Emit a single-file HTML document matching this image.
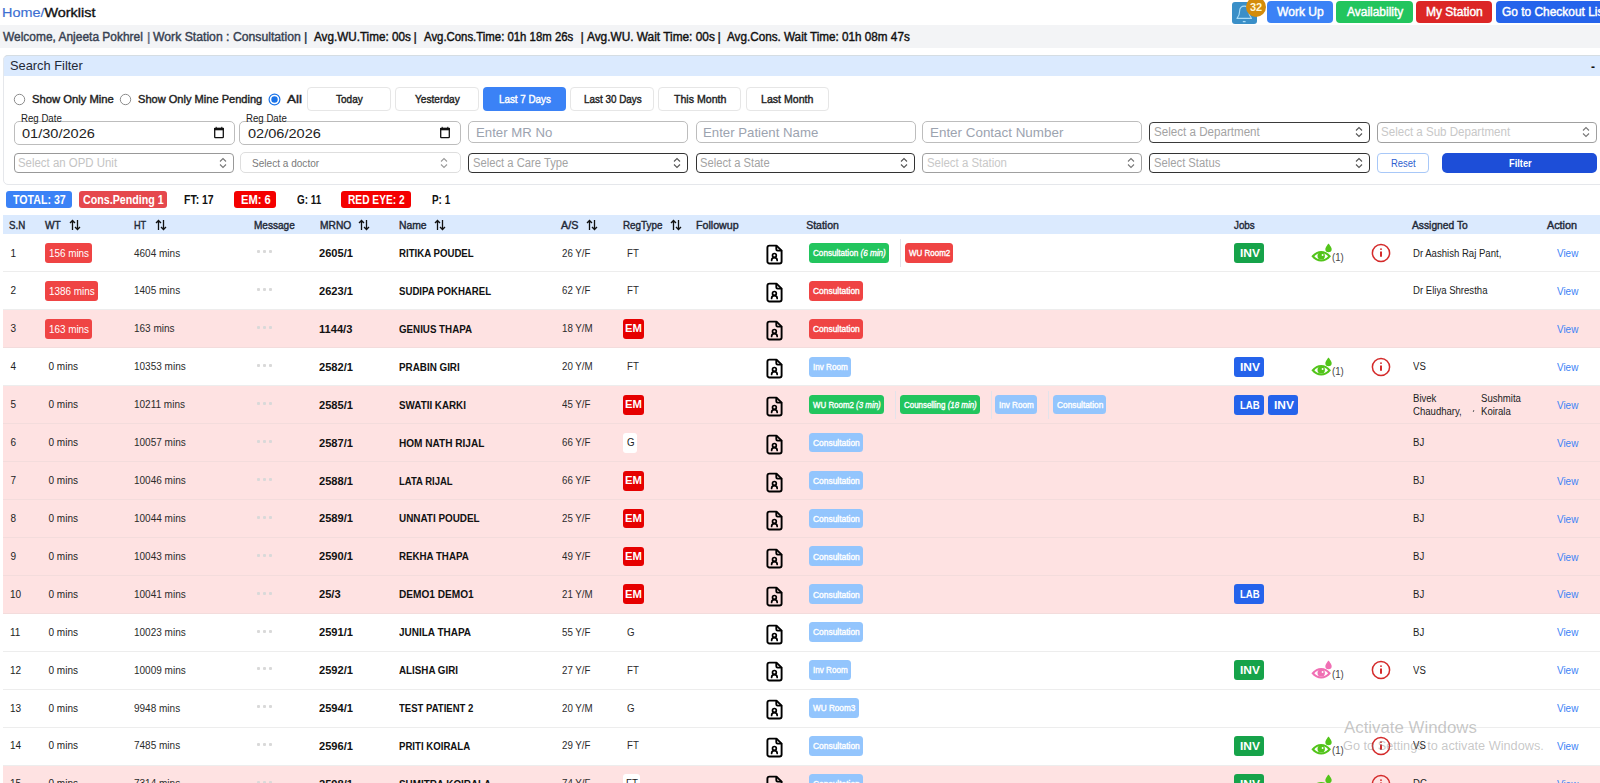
<!DOCTYPE html><html><head><meta charset="utf-8"><style>
html,body{margin:0;padding:0;}
body{width:1600px;height:783px;overflow:hidden;position:relative;background:#fff;font-family:"Liberation Sans",sans-serif;}
.t{position:absolute;white-space:nowrap;transform-origin:0 50%;}
.b{position:absolute;box-sizing:border-box;}
svg{position:absolute;}
</style></head><body>
<div class="t" style="left:2.2px;top:3.8px;font-size:13px;line-height:17px;font-weight:400;color:#111;transform:scaleX(1.108);-webkit-text-stroke:0.35px #111;"><span style="color:#3d6fd2;-webkit-text-stroke:0.15px #3d6fd2">Home/</span>Worklist</div>
<div class="b" style="left:1232px;top:1.8px;width:24.7px;height:21.8px;background:#3a8fc8;border-radius:3px;"></div>
<svg style="left:1232px;top:2px" width="25" height="22" viewBox="0 0 25 22" fill="none" stroke="#a9dcf7" stroke-width="1.1" stroke-linejoin="round"><path d="M5 16.4C7 14.2 7.6 11.2 7.6 9.2C7.6 5.6 9.6 4.1 12.2 4.1C14.8 4.1 16.8 5.6 16.8 9.2C16.8 11.2 17.4 14.2 19.5 16.4Z"/><path d="M10.8 19.6H13.6" stroke-width="1.3"/></svg>
<div class="b" style="left:1245.9px;top:-3px;width:20.2px;height:20.2px;border-radius:50%;background:#d48c0c;"></div>
<div class="t" style="left:1250px;top:0.2px;font-size:11px;line-height:14px;font-weight:700;color:#fff7d6;">32</div>
<div class="b" style="left:1267px;top:1px;width:66px;height:22px;background:#3b82f6;border-radius:4px;"></div>
<div class="t" style="left:1277px;top:4.0px;font-size:12.5px;line-height:16px;font-weight:400;color:#fff;transform:scaleX(0.967);-webkit-text-stroke:0.45px #fff;">Work Up</div>
<div class="b" style="left:1336px;top:1px;width:77px;height:22px;background:#22c55e;border-radius:4px;"></div>
<div class="t" style="left:1347px;top:4.0px;font-size:12.5px;line-height:16px;font-weight:400;color:#fff;transform:scaleX(0.956);-webkit-text-stroke:0.45px #fff;">Availability</div>
<div class="b" style="left:1416px;top:1px;width:76px;height:22px;background:#dc2626;border-radius:4px;"></div>
<div class="t" style="left:1426px;top:4.0px;font-size:12.5px;line-height:16px;font-weight:400;color:#fff;transform:scaleX(0.961);-webkit-text-stroke:0.45px #fff;">My Station</div>
<div class="b" style="left:1496px;top:1px;width:140px;height:22px;background:#2563eb;border-radius:4px;"></div>
<div class="t" style="left:1502px;top:4.0px;font-size:12.5px;line-height:16px;font-weight:400;color:#fff;transform:scaleX(0.954);-webkit-text-stroke:0.45px #fff;">Go to Checkout List</div>
<div class="b" style="left:0px;top:24.5px;width:1600px;height:23.2px;background:#f3f4f6;"></div>
<div class="t" style="left:3px;top:28.5px;font-size:12px;line-height:16px;font-weight:400;color:#374151;transform:scaleX(0.995);-webkit-text-stroke:0.4px #374151;">Welcome, Anjeeta Pokhrel</div>
<div class="t" style="left:147px;top:28.5px;font-size:12px;line-height:16px;font-weight:700;color:#6b7280;">|</div>
<div class="t" style="left:153px;top:28.5px;font-size:12px;line-height:16px;font-weight:400;color:#374151;transform:scaleX(1.018);-webkit-text-stroke:0.4px #374151;">Work Station : Consultation</div>
<div class="t" style="left:304px;top:28.5px;font-size:12px;line-height:16px;font-weight:700;color:#374151;">|</div>
<div class="t" style="left:313.5px;top:28.5px;font-size:12px;line-height:16px;font-weight:400;color:#111;transform:scaleX(0.974);-webkit-text-stroke:0.4px #111;">Avg.WU.Time: 00s</div>
<div class="t" style="left:413.5px;top:28.5px;font-size:12px;line-height:16px;font-weight:700;color:#333;">|</div>
<div class="t" style="left:423.5px;top:28.5px;font-size:12px;line-height:16px;font-weight:400;color:#111;transform:scaleX(0.948);-webkit-text-stroke:0.4px #111;">Avg.Cons.Time: 01h 18m 26s</div>
<div class="t" style="left:580.5px;top:28.5px;font-size:12px;line-height:16px;font-weight:700;color:#333;">|</div>
<div class="t" style="left:587px;top:28.5px;font-size:12px;line-height:16px;font-weight:400;color:#111;transform:scaleX(0.988);-webkit-text-stroke:0.4px #111;">Avg.WU. Wait Time: 00s</div>
<div class="t" style="left:717.5px;top:28.5px;font-size:12px;line-height:16px;font-weight:700;color:#333;">|</div>
<div class="t" style="left:727px;top:28.5px;font-size:12px;line-height:16px;font-weight:400;color:#111;transform:scaleX(0.975);-webkit-text-stroke:0.4px #111;">Avg.Cons. Wait Time: 01h 08m 47s</div>
<div class="b" style="left:3px;top:55px;width:1640px;height:130px;border:1px solid #e5e7eb;border-radius:5px;background:#fff;"></div>
<div class="b" style="left:3px;top:55px;width:1640px;height:20.7px;background:#dbeafe;border-radius:5px 5px 0 0;border-top:1px solid #d5dde3;border-left:1px solid #e3e8ee;"></div>
<div class="t" style="left:10.4px;top:57.2px;font-size:13.5px;line-height:18px;font-weight:400;color:#1f2937;transform:scaleX(0.951);">Search Filter</div>
<div class="t" style="left:1591px;top:59.0px;font-size:12px;line-height:16px;font-weight:700;color:#111;">-</div>
<svg style="left:12.5px;top:92.8px" width="13" height="13"><circle cx="6.5" cy="6.5" r="5.2" fill="#fff" stroke="#8c8c8c" stroke-width="1"/></svg>
<div class="t" style="left:31.5px;top:92.0px;font-size:11px;line-height:14px;font-weight:400;color:#222;transform:scaleX(1.022);-webkit-text-stroke:0.4px #222;">Show Only Mine</div>
<svg style="left:119.0px;top:92.8px" width="13" height="13"><circle cx="6.5" cy="6.5" r="5.2" fill="#fff" stroke="#8c8c8c" stroke-width="1"/></svg>
<div class="t" style="left:138px;top:92.0px;font-size:11px;line-height:14px;font-weight:400;color:#222;transform:scaleX(1.006);-webkit-text-stroke:0.4px #222;">Show Only Mine Pending</div>
<svg style="left:268.0px;top:92.8px" width="13" height="13"><circle cx="6.5" cy="6.5" r="5.4" fill="#fff" stroke="#1a73e8" stroke-width="1.2"/><circle cx="6.5" cy="6.5" r="3.2" fill="#1a73e8"/></svg>
<div class="t" style="left:287px;top:92.0px;font-size:11px;line-height:14px;font-weight:400;color:#222;transform:scaleX(1.224);-webkit-text-stroke:0.4px #222;">All</div>
<div class="b" style="left:307px;top:86.5px;width:83.5px;height:24px;background:#fff;border:1px solid #e6e6e6;border-radius:4px;"></div>
<div class="t" style="left:336px;top:91.5px;font-size:11px;line-height:14px;font-weight:400;color:#222;transform:scaleX(0.910);-webkit-text-stroke:0.4px #222;">Today</div>
<div class="b" style="left:395px;top:86.5px;width:83.5px;height:24px;background:#fff;border:1px solid #e6e6e6;border-radius:4px;"></div>
<div class="t" style="left:415px;top:91.5px;font-size:11px;line-height:14px;font-weight:400;color:#222;transform:scaleX(0.922);-webkit-text-stroke:0.4px #222;">Yesterday</div>
<div class="b" style="left:483px;top:86.5px;width:83px;height:24px;background:#3b82f6;border-radius:4px;"></div>
<div class="t" style="left:498.6px;top:91.5px;font-size:11px;line-height:14px;font-weight:400;color:#fff;transform:scaleX(0.894);-webkit-text-stroke:0.4px #fff;">Last 7 Days</div>
<div class="b" style="left:570px;top:86.5px;width:83.5px;height:24px;background:#fff;border:1px solid #e6e6e6;border-radius:4px;"></div>
<div class="t" style="left:583.6px;top:91.5px;font-size:11px;line-height:14px;font-weight:400;color:#222;transform:scaleX(0.899);-webkit-text-stroke:0.4px #222;">Last 30 Days</div>
<div class="b" style="left:657.5px;top:86.5px;width:83.5px;height:24px;background:#fff;border:1px solid #e6e6e6;border-radius:4px;"></div>
<div class="t" style="left:673.8px;top:91.5px;font-size:11px;line-height:14px;font-weight:400;color:#222;transform:scaleX(0.962);-webkit-text-stroke:0.4px #222;">This Month</div>
<div class="b" style="left:745.5px;top:86.5px;width:83.5px;height:24px;background:#fff;border:1px solid #e6e6e6;border-radius:4px;"></div>
<div class="t" style="left:761.3px;top:91.5px;font-size:11px;line-height:14px;font-weight:400;color:#222;transform:scaleX(0.962);-webkit-text-stroke:0.4px #222;">Last Month</div>
<div class="b" style="left:13.5px;top:121px;width:221px;height:23.5px;background:#fff;border:1px solid #bdbdbd;border-radius:5px;"></div>
<div class="t" style="left:22.0px;top:124.8px;font-size:13px;line-height:17px;font-weight:400;color:#222;transform:scaleX(1.120);">01/30/2026</div>
<svg style="left:213px;top:126px" width="12" height="13" viewBox="0 0 12 13"><rect x="1.7" y="2.5" width="8.6" height="9.2" rx="0.8" fill="none" stroke="#111" stroke-width="1.3"/><rect x="1" y="1.9" width="10" height="2.4" fill="#111"/><path d="M3.2 0.8V2.5M8.8 0.8V2.5" stroke="#111" stroke-width="1"/></svg>
<div class="t" style="left:20.5px;top:112.8px;font-size:10px;line-height:12px;font-weight:400;color:#222;transform:scaleX(0.965);">Reg Date</div>
<div class="b" style="left:239px;top:121px;width:222px;height:23.5px;background:#fff;border:1px solid #bdbdbd;border-radius:5px;"></div>
<div class="t" style="left:247.5px;top:124.8px;font-size:13px;line-height:17px;font-weight:400;color:#222;transform:scaleX(1.120);">02/06/2026</div>
<svg style="left:439px;top:126px" width="12" height="13" viewBox="0 0 12 13"><rect x="1.7" y="2.5" width="8.6" height="9.2" rx="0.8" fill="none" stroke="#111" stroke-width="1.3"/><rect x="1" y="1.9" width="10" height="2.4" fill="#111"/><path d="M3.2 0.8V2.5M8.8 0.8V2.5" stroke="#111" stroke-width="1"/></svg>
<div class="t" style="left:246px;top:112.8px;font-size:10px;line-height:12px;font-weight:400;color:#222;transform:scaleX(0.965);">Reg Date</div>
<div class="b" style="left:468.4px;top:121.2px;width:220px;height:21.5px;background:#fff;border:1px solid #bdbdbd;border-radius:5px;"></div>
<div class="t" style="left:475.9px;top:124.3px;font-size:13px;line-height:17px;font-weight:400;color:#9ca3af;transform:scaleX(1.016);">Enter MR No</div>
<div class="b" style="left:695.5px;top:121.2px;width:220px;height:21.5px;background:#fff;border:1px solid #bdbdbd;border-radius:5px;"></div>
<div class="t" style="left:703.0px;top:124.3px;font-size:13px;line-height:17px;font-weight:400;color:#9ca3af;transform:scaleX(1.016);">Enter Patient Name</div>
<div class="b" style="left:922px;top:121.2px;width:220px;height:21.5px;background:#fff;border:1px solid #bdbdbd;border-radius:5px;"></div>
<div class="t" style="left:929.5px;top:124.3px;font-size:13px;line-height:17px;font-weight:400;color:#9ca3af;transform:scaleX(1.031);">Enter Contact Number</div>
<div class="b" style="left:1149.3px;top:122px;width:220.5px;height:20.5px;background:#fff;border:1.3px solid #3a3a3a;border-radius:4px;"></div>
<div class="t" style="left:1153.8px;top:124.2px;font-size:12px;line-height:16px;font-weight:400;color:#a3a3a3;transform:scaleX(0.967);">Select a Department</div>
<svg style="left:1354.8px;top:126.25px" width="8" height="12" viewBox="0 0 8 12" fill="none" stroke="#555" stroke-width="1.1"><path d="M1 4.5L4 1.5L7 4.5M1 7.5L4 10.5L7 7.5"/></svg>
<div class="b" style="left:1376.5px;top:122px;width:220.5px;height:20.5px;background:#fff;border:1.3px solid #a0a0a0;border-radius:4px;"></div>
<div class="t" style="left:1381.0px;top:124.2px;font-size:12px;line-height:16px;font-weight:400;color:#c8c8c8;transform:scaleX(0.963);">Select a Sub Department</div>
<svg style="left:1582.0px;top:126.25px" width="8" height="12" viewBox="0 0 8 12" fill="none" stroke="#777" stroke-width="1.1"><path d="M1 4.5L4 1.5L7 4.5M1 7.5L4 10.5L7 7.5"/></svg>
<div class="b" style="left:13.5px;top:153px;width:220px;height:20px;background:#fff;border:1.3px solid #999;border-radius:4px;"></div>
<div class="t" style="left:18.0px;top:155.0px;font-size:12px;line-height:16px;font-weight:400;color:#c4c4c4;transform:scaleX(0.952);">Select an OPD Unit</div>
<svg style="left:218.5px;top:157.0px" width="8" height="12" viewBox="0 0 8 12" fill="none" stroke="#777" stroke-width="1.1"><path d="M1 4.5L4 1.5L7 4.5M1 7.5L4 10.5L7 7.5"/></svg>
<div class="b" style="left:240.3px;top:152.2px;width:220.3px;height:21.3px;background:#fff;border:1px solid #dedede;border-radius:5px;"></div>
<div class="t" style="left:251.9px;top:155.6px;font-size:11.5px;line-height:15px;font-weight:400;color:#7a7a7a;transform:scaleX(0.875);">Select a doctor</div>
<svg style="left:439.5px;top:156.9px" width="8" height="12" viewBox="0 0 8 12" fill="none" stroke="#9a9a9a" stroke-width="1.1"><path d="M1 4.5L4 1.5L7 4.5M1 7.5L4 10.5L7 7.5"/></svg>
<div class="b" style="left:468.4px;top:153px;width:219.3px;height:20px;background:#fff;border:1.3px solid #333;border-radius:4px;"></div>
<div class="t" style="left:472.9px;top:155.0px;font-size:12px;line-height:16px;font-weight:400;color:#a3a3a3;transform:scaleX(0.935);">Select a Care Type</div>
<svg style="left:672.7px;top:157.0px" width="8" height="12" viewBox="0 0 8 12" fill="none" stroke="#555" stroke-width="1.1"><path d="M1 4.5L4 1.5L7 4.5M1 7.5L4 10.5L7 7.5"/></svg>
<div class="b" style="left:695.5px;top:153px;width:219.5px;height:20px;background:#fff;border:1.3px solid #333;border-radius:4px;"></div>
<div class="t" style="left:700.0px;top:155.0px;font-size:12px;line-height:16px;font-weight:400;color:#a3a3a3;transform:scaleX(0.933);">Select a State</div>
<svg style="left:900.0px;top:157.0px" width="8" height="12" viewBox="0 0 8 12" fill="none" stroke="#555" stroke-width="1.1"><path d="M1 4.5L4 1.5L7 4.5M1 7.5L4 10.5L7 7.5"/></svg>
<div class="b" style="left:922px;top:153px;width:220px;height:20px;background:#fff;border:1.3px solid #a0a0a0;border-radius:4px;"></div>
<div class="t" style="left:926.5px;top:155.0px;font-size:12px;line-height:16px;font-weight:400;color:#c8c8c8;transform:scaleX(0.951);">Select a Station</div>
<svg style="left:1127px;top:157.0px" width="8" height="12" viewBox="0 0 8 12" fill="none" stroke="#777" stroke-width="1.1"><path d="M1 4.5L4 1.5L7 4.5M1 7.5L4 10.5L7 7.5"/></svg>
<div class="b" style="left:1149.3px;top:153px;width:220.5px;height:20px;background:#fff;border:1.3px solid #333;border-radius:4px;"></div>
<div class="t" style="left:1153.8px;top:155.0px;font-size:12px;line-height:16px;font-weight:400;color:#a3a3a3;transform:scaleX(0.937);">Select Status</div>
<svg style="left:1354.8px;top:157.0px" width="8" height="12" viewBox="0 0 8 12" fill="none" stroke="#555" stroke-width="1.1"><path d="M1 4.5L4 1.5L7 4.5M1 7.5L4 10.5L7 7.5"/></svg>
<div class="b" style="left:1376.7px;top:153px;width:52px;height:20px;background:#fff;border:1px solid #a8c8f8;border-radius:4px;"></div>
<div class="t" style="left:1390.7px;top:156.0px;font-size:11px;line-height:14px;font-weight:400;color:#2f5fd0;transform:scaleX(0.859);">Reset</div>
<div class="b" style="left:1442.4px;top:152.6px;width:154.3px;height:20.3px;background:#1d4ed8;border-radius:5px;"></div>
<div class="t" style="left:1509px;top:156.0px;font-size:11px;line-height:14px;font-weight:700;color:#fff;transform:scaleX(0.843);">Filter</div>
<div class="b" style="left:6px;top:191.3px;width:66px;height:16.7px;background:#3b82f6;border-radius:3px;"></div>
<div class="t" style="left:13px;top:191.8px;font-size:12px;line-height:16px;font-weight:700;color:#fff;transform:scaleX(0.885);">TOTAL: 37</div>
<div class="b" style="left:79.4px;top:191.3px;width:87.6px;height:16.7px;background:#e5484d;border-radius:3px;"></div>
<div class="t" style="left:83px;top:191.8px;font-size:12px;line-height:16px;font-weight:700;color:#fff;transform:scaleX(0.890);">Cons.Pending 1</div>
<div class="t" style="left:184px;top:191.8px;font-size:12px;line-height:16px;font-weight:700;color:#111;transform:scaleX(0.873);">FT: 17</div>
<div class="b" style="left:233.6px;top:191.3px;width:42.8px;height:16.7px;background:#f40000;border-radius:3px;"></div>
<div class="t" style="left:240.5px;top:191.8px;font-size:12px;line-height:16px;font-weight:700;color:#fff;transform:scaleX(0.929);">EM: 6</div>
<div class="t" style="left:297px;top:191.8px;font-size:12px;line-height:16px;font-weight:700;color:#111;transform:scaleX(0.823);">G: 11</div>
<div class="b" style="left:340.6px;top:191.3px;width:70.4px;height:16.7px;background:#f40000;border-radius:3px;"></div>
<div class="t" style="left:348px;top:191.8px;font-size:12px;line-height:16px;font-weight:700;color:#fff;transform:scaleX(0.850);">RED EYE: 2</div>
<div class="t" style="left:432px;top:191.8px;font-size:12px;line-height:16px;font-weight:700;color:#111;transform:scaleX(0.825);">P: 1</div>
<div class="b" style="left:3px;top:215.3px;width:1600px;height:18.7px;background:#dbeafe;"></div>
<div class="t" style="left:9.4px;top:217.6px;font-size:10.5px;line-height:14px;font-weight:400;color:#1f2937;transform:scaleX(0.927);-webkit-text-stroke:0.4px #1f2937;">S.N</div>
<div class="t" style="left:45px;top:217.6px;font-size:10.5px;line-height:14px;font-weight:400;color:#1f2937;transform:scaleX(0.966);-webkit-text-stroke:0.4px #1f2937;">WT</div>
<div class="t" style="left:134px;top:217.6px;font-size:10.5px;line-height:14px;font-weight:400;color:#1f2937;transform:scaleX(0.871);-webkit-text-stroke:0.4px #1f2937;">HT</div>
<div class="t" style="left:253.6px;top:217.6px;font-size:10.5px;line-height:14px;font-weight:400;color:#1f2937;transform:scaleX(0.957);-webkit-text-stroke:0.4px #1f2937;">Message</div>
<div class="t" style="left:319.5px;top:217.6px;font-size:10.5px;line-height:14px;font-weight:400;color:#1f2937;transform:scaleX(0.975);-webkit-text-stroke:0.4px #1f2937;">MRNO</div>
<div class="t" style="left:398.7px;top:217.6px;font-size:10.5px;line-height:14px;font-weight:400;color:#1f2937;transform:scaleX(0.985);-webkit-text-stroke:0.4px #1f2937;">Name</div>
<div class="t" style="left:561px;top:217.6px;font-size:10.5px;line-height:14px;font-weight:400;color:#1f2937;transform:scaleX(1.022);-webkit-text-stroke:0.4px #1f2937;">A/S</div>
<div class="t" style="left:623px;top:217.6px;font-size:10.5px;line-height:14px;font-weight:400;color:#1f2937;transform:scaleX(0.939);-webkit-text-stroke:0.4px #1f2937;">RegType</div>
<div class="t" style="left:695.7px;top:217.6px;font-size:10.5px;line-height:14px;font-weight:400;color:#1f2937;transform:scaleX(1.014);-webkit-text-stroke:0.4px #1f2937;">Followup</div>
<div class="t" style="left:806.2px;top:217.6px;font-size:10.5px;line-height:14px;font-weight:400;color:#1f2937;-webkit-text-stroke:0.4px #1f2937;">Station</div>
<div class="t" style="left:1234.2px;top:217.6px;font-size:10.5px;line-height:14px;font-weight:400;color:#1f2937;transform:scaleX(0.935);-webkit-text-stroke:0.4px #1f2937;">Jobs</div>
<div class="t" style="left:1412px;top:217.6px;font-size:10.5px;line-height:14px;font-weight:400;color:#1f2937;transform:scaleX(0.978);-webkit-text-stroke:0.4px #1f2937;">Assigned To</div>
<div class="t" style="left:1547px;top:217.6px;font-size:10.5px;line-height:14px;font-weight:400;color:#1f2937;transform:scaleX(1.029);-webkit-text-stroke:0.4px #1f2937;">Action</div>
<svg style="left:68.5px;top:218.5px" width="12" height="12" viewBox="0 0 12 12" fill="none" stroke="#111" stroke-width="1.3"><path d="M3.5 11V1.5M1 4L3.5 1.5L6 4M8.5 1V10.5M6 8L8.5 10.5L11 8"/></svg>
<svg style="left:155px;top:218.5px" width="12" height="12" viewBox="0 0 12 12" fill="none" stroke="#111" stroke-width="1.3"><path d="M3.5 11V1.5M1 4L3.5 1.5L6 4M8.5 1V10.5M6 8L8.5 10.5L11 8"/></svg>
<svg style="left:358px;top:218.5px" width="12" height="12" viewBox="0 0 12 12" fill="none" stroke="#111" stroke-width="1.3"><path d="M3.5 11V1.5M1 4L3.5 1.5L6 4M8.5 1V10.5M6 8L8.5 10.5L11 8"/></svg>
<svg style="left:433.7px;top:218.5px" width="12" height="12" viewBox="0 0 12 12" fill="none" stroke="#111" stroke-width="1.3"><path d="M3.5 11V1.5M1 4L3.5 1.5L6 4M8.5 1V10.5M6 8L8.5 10.5L11 8"/></svg>
<svg style="left:586px;top:218.5px" width="12" height="12" viewBox="0 0 12 12" fill="none" stroke="#111" stroke-width="1.3"><path d="M3.5 11V1.5M1 4L3.5 1.5L6 4M8.5 1V10.5M6 8L8.5 10.5L11 8"/></svg>
<svg style="left:669.5px;top:218.5px" width="12" height="12" viewBox="0 0 12 12" fill="none" stroke="#111" stroke-width="1.3"><path d="M3.5 11V1.5M1 4L3.5 1.5L6 4M8.5 1V10.5M6 8L8.5 10.5L11 8"/></svg>
<div class="b" style="left:3px;top:271px;width:1600px;height:1px;background:#ededed;"></div>
<div class="t" style="left:10.5px;top:246.5px;font-size:10px;line-height:13px;font-weight:400;color:#222;">1</div>
<div class="b" style="left:45px;top:243.4px;width:47px;height:19.5px;background:#ef4444;border-radius:3px;"></div>
<div class="t" style="left:49.2px;top:246.0px;font-size:10.5px;line-height:14px;font-weight:400;color:#fff;transform:scaleX(0.940);">156 mins</div>
<div class="t" style="left:134px;top:246.5px;font-size:10px;line-height:13px;font-weight:400;color:#2b2b2b;">4604 mins</div>
<div class="b" style="left:256.5px;top:250.4px;width:3px;height:3px;background:#d9d9d9;border-radius:1px;"></div>
<div class="b" style="left:262.5px;top:250.4px;width:3px;height:3px;background:#d9d9d9;border-radius:1px;"></div>
<div class="b" style="left:268.5px;top:250.4px;width:3px;height:3px;background:#d9d9d9;border-radius:1px;"></div>
<div class="t" style="left:319px;top:246.0px;font-size:11px;line-height:14px;font-weight:700;color:#111;transform:scaleX(1.010);">2605/1</div>
<div class="t" style="left:398.7px;top:246.0px;font-size:11px;line-height:14px;font-weight:700;color:#111;transform:scaleX(0.877);">RITIKA POUDEL</div>
<div class="t" style="left:561.5px;top:246.5px;font-size:10px;line-height:13px;font-weight:400;color:#2b2b2b;transform:scaleX(0.973);">26 Y/F</div>
<div class="t" style="left:626.6px;top:246.5px;font-size:10px;line-height:13px;font-weight:400;color:#2b2b2b;transform:scaleX(0.973);">FT</div>
<svg style="left:766.2px;top:244.4px" width="17" height="21" viewBox="0 0 17 21" fill="none" stroke="#000" stroke-width="1.9" stroke-linejoin="round" stroke-linecap="round"><path d="M3.5 1.6H10.5L15.6 6.7V17.4A2.1 2.1 0 0 1 13.5 19.5H3.5A2.1 2.1 0 0 1 1.4 17.4V3.7A2.1 2.1 0 0 1 3.5 1.6Z"/><path d="M10.3 1.9V5.3A1.3 1.3 0 0 0 11.6 6.6H15.3"/><circle cx="8.4" cy="11.4" r="1.9" stroke-width="1.7"/><path d="M5.6 16.4A2.8 2.8 0 0 1 11.2 16.4" stroke-width="1.7"/></svg>
<div class="b" style="left:809.4px;top:243.1px;width:80px;height:19.7px;background:#22c55e;border-radius:3.5px;"></div>
<div class="t" style="left:813.4px;top:248.3px;font-size:8.5px;line-height:11px;font-weight:400;color:#fff;transform:scaleX(0.956);-webkit-text-stroke:0.35px #fff;">Consultation <i>(6 min)</i></div>
<div class="b" style="left:900.4px;top:239.0px;width:1px;height:28px;background:#e3e3ea;"></div>
<div class="b" style="left:904.9px;top:243.1px;width:48.5px;height:19.7px;background:#ef4444;border-radius:3.5px;"></div>
<div class="t" style="left:908.9px;top:248.3px;font-size:8.5px;line-height:11px;font-weight:400;color:#fff;transform:scaleX(0.939);-webkit-text-stroke:0.35px #fff;">WU Room2</div>
<div class="b" style="left:1234.2px;top:243.2px;width:29.8px;height:19.7px;background:#16a34a;border-radius:3px;"></div>
<div class="t" style="left:1239.7px;top:246.0px;font-size:10.5px;line-height:14px;font-weight:700;color:#fff;transform:scaleX(1.137);">INV</div>
<svg style="left:1311.3px;top:243.0px" width="22" height="20" viewBox="0 0 22 20"><path d="M17.5 0.4C17.5 0.4 14.3 4.2 14.3 6.1A3.2 3.2 0 0 0 20.7 6.1C20.7 4.2 17.5 0.4 17.5 0.4Z" fill="#52c41a"/><path d="M0.4 13.3C3.4 9.6 6.8 8 10.2 8S17 9.6 20 13.3C17 17 13.6 18.6 10.2 18.6S3.4 17 0.4 13.3Z" fill="#52c41a"/><path d="M3.3 13.3C5.3 11.2 7.6 10.1 10.2 10.1S15.1 11.2 17.1 13.3C15.1 15.4 12.8 16.5 10.2 16.5S5.3 15.4 3.3 13.3Z" fill="#fff"/><circle cx="10.2" cy="12.9" r="3.7" fill="#52c41a"/><circle cx="11.6" cy="12" r="0.95" fill="#fff"/></svg>
<div class="t" style="left:1332.1px;top:251.8px;font-size:10px;line-height:11px;font-weight:400;color:#444;transform:scaleX(0.962);">(1)</div>
<svg style="left:1370.8px;top:242.8px" width="20" height="20" viewBox="0 0 20 20" fill="none" stroke="#d42a2a"><circle cx="10" cy="10" r="8.6" stroke-width="1.5"/><path d="M10 8.6V13.8" stroke-width="2"/><path d="M10 5.6V6.8" stroke-width="2"/></svg>
<div class="t" style="left:1412.5px;top:246.5px;font-size:10px;line-height:13px;font-weight:400;color:#222;transform:scaleX(0.957);">Dr Aashish Raj Pant,</div>
<div class="t" style="left:1557.3px;top:247.2px;font-size:10px;line-height:13px;font-weight:400;color:#3b82f6;transform:scaleX(0.990);">View</div>
<div class="b" style="left:3px;top:309px;width:1600px;height:1px;background:#ededed;"></div>
<div class="t" style="left:10.5px;top:284.4px;font-size:10px;line-height:13px;font-weight:400;color:#222;">2</div>
<div class="b" style="left:45px;top:281.32px;width:53px;height:19.5px;background:#ef4444;border-radius:3px;"></div>
<div class="t" style="left:49.2px;top:283.9px;font-size:10.5px;line-height:14px;font-weight:400;color:#fff;transform:scaleX(0.944);">1386 mins</div>
<div class="t" style="left:134px;top:284.4px;font-size:10px;line-height:13px;font-weight:400;color:#2b2b2b;">1405 mins</div>
<div class="b" style="left:256.5px;top:288.32px;width:3px;height:3px;background:#d9d9d9;border-radius:1px;"></div>
<div class="b" style="left:262.5px;top:288.32px;width:3px;height:3px;background:#d9d9d9;border-radius:1px;"></div>
<div class="b" style="left:268.5px;top:288.32px;width:3px;height:3px;background:#d9d9d9;border-radius:1px;"></div>
<div class="t" style="left:319px;top:283.9px;font-size:11px;line-height:14px;font-weight:700;color:#111;transform:scaleX(1.010);">2623/1</div>
<div class="t" style="left:398.7px;top:283.9px;font-size:11px;line-height:14px;font-weight:700;color:#111;transform:scaleX(0.876);">SUDIPA POKHAREL</div>
<div class="t" style="left:561.5px;top:284.4px;font-size:10px;line-height:13px;font-weight:400;color:#2b2b2b;transform:scaleX(0.973);">62 Y/F</div>
<div class="t" style="left:626.6px;top:284.4px;font-size:10px;line-height:13px;font-weight:400;color:#2b2b2b;transform:scaleX(0.973);">FT</div>
<svg style="left:766.2px;top:282.32px" width="17" height="21" viewBox="0 0 17 21" fill="none" stroke="#000" stroke-width="1.9" stroke-linejoin="round" stroke-linecap="round"><path d="M3.5 1.6H10.5L15.6 6.7V17.4A2.1 2.1 0 0 1 13.5 19.5H3.5A2.1 2.1 0 0 1 1.4 17.4V3.7A2.1 2.1 0 0 1 3.5 1.6Z"/><path d="M10.3 1.9V5.3A1.3 1.3 0 0 0 11.6 6.6H15.3"/><circle cx="8.4" cy="11.4" r="1.9" stroke-width="1.7"/><path d="M5.6 16.4A2.8 2.8 0 0 1 11.2 16.4" stroke-width="1.7"/></svg>
<div class="b" style="left:809.4px;top:281.02000000000004px;width:54px;height:19.7px;background:#ef4444;border-radius:3.5px;"></div>
<div class="t" style="left:813.4px;top:286.2px;font-size:8.5px;line-height:11px;font-weight:400;color:#fff;transform:scaleX(0.990);-webkit-text-stroke:0.35px #fff;">Consultation</div>
<div class="t" style="left:1412.5px;top:284.4px;font-size:10px;line-height:13px;font-weight:400;color:#222;transform:scaleX(0.957);">Dr Eliya Shrestha</div>
<div class="t" style="left:1557.3px;top:285.1px;font-size:10px;line-height:13px;font-weight:400;color:#3b82f6;transform:scaleX(0.990);">View</div>
<div class="b" style="left:3px;top:310px;width:1600px;height:38px;background:#fee2e2;"></div>
<div class="b" style="left:3px;top:347px;width:1600px;height:1px;background:#f3dcdc;"></div>
<div class="t" style="left:10.5px;top:322.3px;font-size:10px;line-height:13px;font-weight:400;color:#222;">3</div>
<div class="b" style="left:45px;top:319.22999999999996px;width:47px;height:19.5px;background:#ef4444;border-radius:3px;"></div>
<div class="t" style="left:49.2px;top:321.8px;font-size:10.5px;line-height:14px;font-weight:400;color:#fff;transform:scaleX(0.940);">163 mins</div>
<div class="t" style="left:134px;top:322.3px;font-size:10px;line-height:13px;font-weight:400;color:#2b2b2b;">163 mins</div>
<div class="b" style="left:256.5px;top:326.22999999999996px;width:3px;height:3px;background:#d9d9d9;border-radius:1px;"></div>
<div class="b" style="left:262.5px;top:326.22999999999996px;width:3px;height:3px;background:#d9d9d9;border-radius:1px;"></div>
<div class="b" style="left:268.5px;top:326.22999999999996px;width:3px;height:3px;background:#d9d9d9;border-radius:1px;"></div>
<div class="t" style="left:319px;top:321.8px;font-size:11px;line-height:14px;font-weight:700;color:#111;transform:scaleX(1.010);">1144/3</div>
<div class="t" style="left:398.7px;top:321.8px;font-size:11px;line-height:14px;font-weight:700;color:#111;transform:scaleX(0.887);">GENIUS THAPA</div>
<div class="t" style="left:561.5px;top:322.3px;font-size:10px;line-height:13px;font-weight:400;color:#2b2b2b;transform:scaleX(0.973);">18 Y/M</div>
<div class="b" style="left:623.2px;top:319.03px;width:20.7px;height:19.9px;background:#e60000;border-radius:3px;"></div>
<div class="t" style="left:625.2px;top:322.3px;font-size:10px;line-height:13px;font-weight:700;color:#fff;transform:scaleX(1.127);">EM</div>
<svg style="left:766.2px;top:320.22999999999996px" width="17" height="21" viewBox="0 0 17 21" fill="none" stroke="#000" stroke-width="1.9" stroke-linejoin="round" stroke-linecap="round"><path d="M3.5 1.6H10.5L15.6 6.7V17.4A2.1 2.1 0 0 1 13.5 19.5H3.5A2.1 2.1 0 0 1 1.4 17.4V3.7A2.1 2.1 0 0 1 3.5 1.6Z"/><path d="M10.3 1.9V5.3A1.3 1.3 0 0 0 11.6 6.6H15.3"/><circle cx="8.4" cy="11.4" r="1.9" stroke-width="1.7"/><path d="M5.6 16.4A2.8 2.8 0 0 1 11.2 16.4" stroke-width="1.7"/></svg>
<div class="b" style="left:809.4px;top:318.93px;width:54px;height:19.7px;background:#ef4444;border-radius:3.5px;"></div>
<div class="t" style="left:813.4px;top:324.1px;font-size:8.5px;line-height:11px;font-weight:400;color:#fff;transform:scaleX(0.990);-webkit-text-stroke:0.35px #fff;">Consultation</div>
<div class="t" style="left:1557.3px;top:323.0px;font-size:10px;line-height:13px;font-weight:400;color:#3b82f6;transform:scaleX(0.990);">View</div>
<div class="b" style="left:3px;top:385px;width:1600px;height:1px;background:#ededed;"></div>
<div class="t" style="left:10.5px;top:360.2px;font-size:10px;line-height:13px;font-weight:400;color:#222;">4</div>
<div class="t" style="left:48.5px;top:360.2px;font-size:10px;line-height:13px;font-weight:400;color:#222;">0 mins</div>
<div class="t" style="left:134px;top:360.2px;font-size:10px;line-height:13px;font-weight:400;color:#2b2b2b;">10353 mins</div>
<div class="b" style="left:256.5px;top:364.15px;width:3px;height:3px;background:#d9d9d9;border-radius:1px;"></div>
<div class="b" style="left:262.5px;top:364.15px;width:3px;height:3px;background:#d9d9d9;border-radius:1px;"></div>
<div class="b" style="left:268.5px;top:364.15px;width:3px;height:3px;background:#d9d9d9;border-radius:1px;"></div>
<div class="t" style="left:319px;top:359.8px;font-size:11px;line-height:14px;font-weight:700;color:#111;transform:scaleX(1.010);">2582/1</div>
<div class="t" style="left:398.7px;top:359.8px;font-size:11px;line-height:14px;font-weight:700;color:#111;transform:scaleX(0.895);">PRABIN GIRI</div>
<div class="t" style="left:561.5px;top:360.2px;font-size:10px;line-height:13px;font-weight:400;color:#2b2b2b;transform:scaleX(0.973);">20 Y/M</div>
<div class="t" style="left:626.6px;top:360.2px;font-size:10px;line-height:13px;font-weight:400;color:#2b2b2b;transform:scaleX(0.973);">FT</div>
<svg style="left:766.2px;top:358.15px" width="17" height="21" viewBox="0 0 17 21" fill="none" stroke="#000" stroke-width="1.9" stroke-linejoin="round" stroke-linecap="round"><path d="M3.5 1.6H10.5L15.6 6.7V17.4A2.1 2.1 0 0 1 13.5 19.5H3.5A2.1 2.1 0 0 1 1.4 17.4V3.7A2.1 2.1 0 0 1 3.5 1.6Z"/><path d="M10.3 1.9V5.3A1.3 1.3 0 0 0 11.6 6.6H15.3"/><circle cx="8.4" cy="11.4" r="1.9" stroke-width="1.7"/><path d="M5.6 16.4A2.8 2.8 0 0 1 11.2 16.4" stroke-width="1.7"/></svg>
<div class="b" style="left:809.4px;top:356.85px;width:42px;height:19.7px;background:#93c5fd;border-radius:3.5px;"></div>
<div class="t" style="left:813.4px;top:362.1px;font-size:8.5px;line-height:11px;font-weight:400;color:#fff;transform:scaleX(0.956);-webkit-text-stroke:0.35px #fff;">Inv Room</div>
<div class="b" style="left:1234.2px;top:356.95px;width:29.8px;height:19.7px;background:#2563eb;border-radius:3px;"></div>
<div class="t" style="left:1239.7px;top:359.8px;font-size:10.5px;line-height:14px;font-weight:700;color:#fff;transform:scaleX(1.137);">INV</div>
<svg style="left:1311.3px;top:356.75px" width="22" height="20" viewBox="0 0 22 20"><path d="M17.5 0.4C17.5 0.4 14.3 4.2 14.3 6.1A3.2 3.2 0 0 0 20.7 6.1C20.7 4.2 17.5 0.4 17.5 0.4Z" fill="#52c41a"/><path d="M0.4 13.3C3.4 9.6 6.8 8 10.2 8S17 9.6 20 13.3C17 17 13.6 18.6 10.2 18.6S3.4 17 0.4 13.3Z" fill="#52c41a"/><path d="M3.3 13.3C5.3 11.2 7.6 10.1 10.2 10.1S15.1 11.2 17.1 13.3C15.1 15.4 12.8 16.5 10.2 16.5S5.3 15.4 3.3 13.3Z" fill="#fff"/><circle cx="10.2" cy="12.9" r="3.7" fill="#52c41a"/><circle cx="11.6" cy="12" r="0.95" fill="#fff"/></svg>
<div class="t" style="left:1332.1px;top:365.6px;font-size:10px;line-height:11px;font-weight:400;color:#444;transform:scaleX(0.962);">(1)</div>
<svg style="left:1370.8px;top:356.55px" width="20" height="20" viewBox="0 0 20 20" fill="none" stroke="#d42a2a"><circle cx="10" cy="10" r="8.6" stroke-width="1.5"/><path d="M10 8.6V13.8" stroke-width="2"/><path d="M10 5.6V6.8" stroke-width="2"/></svg>
<div class="t" style="left:1412.5px;top:360.2px;font-size:10px;line-height:13px;font-weight:400;color:#222;transform:scaleX(0.957);">VS</div>
<div class="t" style="left:1557.3px;top:360.9px;font-size:10px;line-height:13px;font-weight:400;color:#3b82f6;transform:scaleX(0.990);">View</div>
<div class="b" style="left:3px;top:386px;width:1600px;height:38px;background:#fee2e2;"></div>
<div class="b" style="left:3px;top:423px;width:1600px;height:1px;background:#f3dcdc;"></div>
<div class="t" style="left:10.5px;top:398.2px;font-size:10px;line-height:13px;font-weight:400;color:#222;">5</div>
<div class="t" style="left:48.5px;top:398.2px;font-size:10px;line-height:13px;font-weight:400;color:#222;">0 mins</div>
<div class="t" style="left:134px;top:398.2px;font-size:10px;line-height:13px;font-weight:400;color:#2b2b2b;">10211 mins</div>
<div class="b" style="left:256.5px;top:402.06px;width:3px;height:3px;background:#d9d9d9;border-radius:1px;"></div>
<div class="b" style="left:262.5px;top:402.06px;width:3px;height:3px;background:#d9d9d9;border-radius:1px;"></div>
<div class="b" style="left:268.5px;top:402.06px;width:3px;height:3px;background:#d9d9d9;border-radius:1px;"></div>
<div class="t" style="left:319px;top:397.7px;font-size:11px;line-height:14px;font-weight:700;color:#111;transform:scaleX(1.010);">2585/1</div>
<div class="t" style="left:398.7px;top:397.7px;font-size:11px;line-height:14px;font-weight:700;color:#111;transform:scaleX(0.893);">SWATII KARKI</div>
<div class="t" style="left:561.5px;top:398.2px;font-size:10px;line-height:13px;font-weight:400;color:#2b2b2b;transform:scaleX(0.973);">45 Y/F</div>
<div class="b" style="left:623.2px;top:394.86px;width:20.7px;height:19.9px;background:#e60000;border-radius:3px;"></div>
<div class="t" style="left:625.2px;top:398.2px;font-size:10px;line-height:13px;font-weight:700;color:#fff;transform:scaleX(1.127);">EM</div>
<svg style="left:766.2px;top:396.06px" width="17" height="21" viewBox="0 0 17 21" fill="none" stroke="#000" stroke-width="1.9" stroke-linejoin="round" stroke-linecap="round"><path d="M3.5 1.6H10.5L15.6 6.7V17.4A2.1 2.1 0 0 1 13.5 19.5H3.5A2.1 2.1 0 0 1 1.4 17.4V3.7A2.1 2.1 0 0 1 3.5 1.6Z"/><path d="M10.3 1.9V5.3A1.3 1.3 0 0 0 11.6 6.6H15.3"/><circle cx="8.4" cy="11.4" r="1.9" stroke-width="1.7"/><path d="M5.6 16.4A2.8 2.8 0 0 1 11.2 16.4" stroke-width="1.7"/></svg>
<div class="b" style="left:809.4px;top:394.76000000000005px;width:75px;height:19.7px;background:#22c55e;border-radius:3.5px;"></div>
<div class="t" style="left:813.4px;top:400.0px;font-size:8.5px;line-height:11px;font-weight:400;color:#fff;transform:scaleX(0.931);-webkit-text-stroke:0.35px #fff;">WU Room2 <i>(3 min)</i></div>
<div class="b" style="left:895.4px;top:390.66px;width:1px;height:28px;background:#e3e3ea;"></div>
<div class="b" style="left:899.9px;top:394.76000000000005px;width:80px;height:19.7px;background:#22c55e;border-radius:3.5px;"></div>
<div class="t" style="left:903.9px;top:400.0px;font-size:8.5px;line-height:11px;font-weight:400;color:#fff;transform:scaleX(0.933);-webkit-text-stroke:0.35px #fff;">Counselling <i>(18 min)</i></div>
<div class="b" style="left:990.9px;top:390.66px;width:1px;height:28px;background:#e3e3ea;"></div>
<div class="b" style="left:995.4px;top:394.76000000000005px;width:42px;height:19.7px;background:#93c5fd;border-radius:3.5px;"></div>
<div class="t" style="left:999.4px;top:400.0px;font-size:8.5px;line-height:11px;font-weight:400;color:#fff;transform:scaleX(0.956);-webkit-text-stroke:0.35px #fff;">Inv Room</div>
<div class="b" style="left:1048.4px;top:390.66px;width:1px;height:28px;background:#e3e3ea;"></div>
<div class="b" style="left:1052.9px;top:394.76000000000005px;width:53.5px;height:19.7px;background:#93c5fd;border-radius:3.5px;"></div>
<div class="t" style="left:1056.9px;top:400.0px;font-size:8.5px;line-height:11px;font-weight:400;color:#fff;transform:scaleX(0.979);-webkit-text-stroke:0.35px #fff;">Consultation</div>
<div class="b" style="left:1234.2px;top:394.86px;width:29.8px;height:19.7px;background:#2563eb;border-radius:3px;"></div>
<div class="t" style="left:1239.7px;top:397.7px;font-size:10.5px;line-height:14px;font-weight:700;color:#fff;transform:scaleX(0.914);">LAB</div>
<div class="b" style="left:1268.2px;top:394.86px;width:29.8px;height:19.7px;background:#2563eb;border-radius:3px;"></div>
<div class="t" style="left:1273.7px;top:397.7px;font-size:10.5px;line-height:14px;font-weight:700;color:#fff;transform:scaleX(1.137);">INV</div>
<div class="t" style="left:1412.5px;top:393.2px;font-size:10px;line-height:12px;font-weight:400;color:#222;transform:scaleX(0.957);">Bivek</div>
<div class="t" style="left:1412.5px;top:406.2px;font-size:10px;line-height:12px;font-weight:400;color:#222;transform:scaleX(0.957);">Chaudhary,</div>
<div class="b" style="left:1473.4px;top:410.26000000000005px;width:1.1px;height:2.4px;background:#666;transform:skewX(-15deg);"></div>
<div class="t" style="left:1480.5px;top:393.2px;font-size:10px;line-height:12px;font-weight:400;color:#222;transform:scaleX(0.957);">Sushmita</div>
<div class="t" style="left:1480.5px;top:406.2px;font-size:10px;line-height:12px;font-weight:400;color:#222;transform:scaleX(0.957);">Koirala</div>
<div class="t" style="left:1557.3px;top:398.9px;font-size:10px;line-height:13px;font-weight:400;color:#3b82f6;transform:scaleX(0.990);">View</div>
<div class="b" style="left:3px;top:424px;width:1600px;height:38px;background:#fee2e2;"></div>
<div class="b" style="left:3px;top:461px;width:1600px;height:1px;background:#f3dcdc;"></div>
<div class="t" style="left:10.5px;top:436.1px;font-size:10px;line-height:13px;font-weight:400;color:#222;">6</div>
<div class="t" style="left:48.5px;top:436.1px;font-size:10px;line-height:13px;font-weight:400;color:#222;">0 mins</div>
<div class="t" style="left:134px;top:436.1px;font-size:10px;line-height:13px;font-weight:400;color:#2b2b2b;">10057 mins</div>
<div class="b" style="left:256.5px;top:439.96999999999997px;width:3px;height:3px;background:#d9d9d9;border-radius:1px;"></div>
<div class="b" style="left:262.5px;top:439.96999999999997px;width:3px;height:3px;background:#d9d9d9;border-radius:1px;"></div>
<div class="b" style="left:268.5px;top:439.96999999999997px;width:3px;height:3px;background:#d9d9d9;border-radius:1px;"></div>
<div class="t" style="left:319px;top:435.6px;font-size:11px;line-height:14px;font-weight:700;color:#111;transform:scaleX(1.010);">2587/1</div>
<div class="t" style="left:398.7px;top:435.6px;font-size:11px;line-height:14px;font-weight:700;color:#111;transform:scaleX(0.915);">HOM NATH RIJAL</div>
<div class="t" style="left:561.5px;top:436.1px;font-size:10px;line-height:13px;font-weight:400;color:#2b2b2b;transform:scaleX(0.973);">66 Y/F</div>
<div class="b" style="left:623.1px;top:433.07px;width:13.5px;height:19.7px;background:#fff;border-radius:3px;"></div>
<div class="t" style="left:626.6px;top:436.1px;font-size:10px;line-height:13px;font-weight:400;color:#222;transform:scaleX(0.973);">G</div>
<svg style="left:766.2px;top:433.96999999999997px" width="17" height="21" viewBox="0 0 17 21" fill="none" stroke="#000" stroke-width="1.9" stroke-linejoin="round" stroke-linecap="round"><path d="M3.5 1.6H10.5L15.6 6.7V17.4A2.1 2.1 0 0 1 13.5 19.5H3.5A2.1 2.1 0 0 1 1.4 17.4V3.7A2.1 2.1 0 0 1 3.5 1.6Z"/><path d="M10.3 1.9V5.3A1.3 1.3 0 0 0 11.6 6.6H15.3"/><circle cx="8.4" cy="11.4" r="1.9" stroke-width="1.7"/><path d="M5.6 16.4A2.8 2.8 0 0 1 11.2 16.4" stroke-width="1.7"/></svg>
<div class="b" style="left:809.4px;top:432.67px;width:54px;height:19.7px;background:#93c5fd;border-radius:3.5px;"></div>
<div class="t" style="left:813.4px;top:437.9px;font-size:8.5px;line-height:11px;font-weight:400;color:#fff;transform:scaleX(0.990);-webkit-text-stroke:0.35px #fff;">Consultation</div>
<div class="t" style="left:1412.5px;top:436.1px;font-size:10px;line-height:13px;font-weight:400;color:#222;transform:scaleX(0.957);">BJ</div>
<div class="t" style="left:1557.3px;top:436.8px;font-size:10px;line-height:13px;font-weight:400;color:#3b82f6;transform:scaleX(0.990);">View</div>
<div class="b" style="left:3px;top:462px;width:1600px;height:38px;background:#fee2e2;"></div>
<div class="b" style="left:3px;top:499px;width:1600px;height:1px;background:#f3dcdc;"></div>
<div class="t" style="left:10.5px;top:474.0px;font-size:10px;line-height:13px;font-weight:400;color:#222;">7</div>
<div class="t" style="left:48.5px;top:474.0px;font-size:10px;line-height:13px;font-weight:400;color:#222;">0 mins</div>
<div class="t" style="left:134px;top:474.0px;font-size:10px;line-height:13px;font-weight:400;color:#2b2b2b;">10046 mins</div>
<div class="b" style="left:256.5px;top:477.89px;width:3px;height:3px;background:#d9d9d9;border-radius:1px;"></div>
<div class="b" style="left:262.5px;top:477.89px;width:3px;height:3px;background:#d9d9d9;border-radius:1px;"></div>
<div class="b" style="left:268.5px;top:477.89px;width:3px;height:3px;background:#d9d9d9;border-radius:1px;"></div>
<div class="t" style="left:319px;top:473.5px;font-size:11px;line-height:14px;font-weight:700;color:#111;transform:scaleX(1.010);">2588/1</div>
<div class="t" style="left:398.7px;top:473.5px;font-size:11px;line-height:14px;font-weight:700;color:#111;transform:scaleX(0.864);">LATA RIJAL</div>
<div class="t" style="left:561.5px;top:474.0px;font-size:10px;line-height:13px;font-weight:400;color:#2b2b2b;transform:scaleX(0.973);">66 Y/F</div>
<div class="b" style="left:623.2px;top:470.69px;width:20.7px;height:19.9px;background:#e60000;border-radius:3px;"></div>
<div class="t" style="left:625.2px;top:474.0px;font-size:10px;line-height:13px;font-weight:700;color:#fff;transform:scaleX(1.127);">EM</div>
<svg style="left:766.2px;top:471.89px" width="17" height="21" viewBox="0 0 17 21" fill="none" stroke="#000" stroke-width="1.9" stroke-linejoin="round" stroke-linecap="round"><path d="M3.5 1.6H10.5L15.6 6.7V17.4A2.1 2.1 0 0 1 13.5 19.5H3.5A2.1 2.1 0 0 1 1.4 17.4V3.7A2.1 2.1 0 0 1 3.5 1.6Z"/><path d="M10.3 1.9V5.3A1.3 1.3 0 0 0 11.6 6.6H15.3"/><circle cx="8.4" cy="11.4" r="1.9" stroke-width="1.7"/><path d="M5.6 16.4A2.8 2.8 0 0 1 11.2 16.4" stroke-width="1.7"/></svg>
<div class="b" style="left:809.4px;top:470.59000000000003px;width:54px;height:19.7px;background:#93c5fd;border-radius:3.5px;"></div>
<div class="t" style="left:813.4px;top:475.8px;font-size:8.5px;line-height:11px;font-weight:400;color:#fff;transform:scaleX(0.990);-webkit-text-stroke:0.35px #fff;">Consultation</div>
<div class="t" style="left:1412.5px;top:474.0px;font-size:10px;line-height:13px;font-weight:400;color:#222;transform:scaleX(0.957);">BJ</div>
<div class="t" style="left:1557.3px;top:474.7px;font-size:10px;line-height:13px;font-weight:400;color:#3b82f6;transform:scaleX(0.990);">View</div>
<div class="b" style="left:3px;top:500px;width:1600px;height:38px;background:#fee2e2;"></div>
<div class="b" style="left:3px;top:537px;width:1600px;height:1px;background:#f3dcdc;"></div>
<div class="t" style="left:10.5px;top:511.9px;font-size:10px;line-height:13px;font-weight:400;color:#222;">8</div>
<div class="t" style="left:48.5px;top:511.9px;font-size:10px;line-height:13px;font-weight:400;color:#222;">0 mins</div>
<div class="t" style="left:134px;top:511.9px;font-size:10px;line-height:13px;font-weight:400;color:#2b2b2b;">10044 mins</div>
<div class="b" style="left:256.5px;top:515.8px;width:3px;height:3px;background:#d9d9d9;border-radius:1px;"></div>
<div class="b" style="left:262.5px;top:515.8px;width:3px;height:3px;background:#d9d9d9;border-radius:1px;"></div>
<div class="b" style="left:268.5px;top:515.8px;width:3px;height:3px;background:#d9d9d9;border-radius:1px;"></div>
<div class="t" style="left:319px;top:511.4px;font-size:11px;line-height:14px;font-weight:700;color:#111;transform:scaleX(1.010);">2589/1</div>
<div class="t" style="left:398.7px;top:511.4px;font-size:11px;line-height:14px;font-weight:700;color:#111;transform:scaleX(0.900);">UNNATI POUDEL</div>
<div class="t" style="left:561.5px;top:511.9px;font-size:10px;line-height:13px;font-weight:400;color:#2b2b2b;transform:scaleX(0.973);">25 Y/F</div>
<div class="b" style="left:623.2px;top:508.59999999999997px;width:20.7px;height:19.9px;background:#e60000;border-radius:3px;"></div>
<div class="t" style="left:625.2px;top:511.9px;font-size:10px;line-height:13px;font-weight:700;color:#fff;transform:scaleX(1.127);">EM</div>
<svg style="left:766.2px;top:509.79999999999995px" width="17" height="21" viewBox="0 0 17 21" fill="none" stroke="#000" stroke-width="1.9" stroke-linejoin="round" stroke-linecap="round"><path d="M3.5 1.6H10.5L15.6 6.7V17.4A2.1 2.1 0 0 1 13.5 19.5H3.5A2.1 2.1 0 0 1 1.4 17.4V3.7A2.1 2.1 0 0 1 3.5 1.6Z"/><path d="M10.3 1.9V5.3A1.3 1.3 0 0 0 11.6 6.6H15.3"/><circle cx="8.4" cy="11.4" r="1.9" stroke-width="1.7"/><path d="M5.6 16.4A2.8 2.8 0 0 1 11.2 16.4" stroke-width="1.7"/></svg>
<div class="b" style="left:809.4px;top:508.5px;width:54px;height:19.7px;background:#93c5fd;border-radius:3.5px;"></div>
<div class="t" style="left:813.4px;top:513.7px;font-size:8.5px;line-height:11px;font-weight:400;color:#fff;transform:scaleX(0.990);-webkit-text-stroke:0.35px #fff;">Consultation</div>
<div class="t" style="left:1412.5px;top:511.9px;font-size:10px;line-height:13px;font-weight:400;color:#222;transform:scaleX(0.957);">BJ</div>
<div class="t" style="left:1557.3px;top:512.6px;font-size:10px;line-height:13px;font-weight:400;color:#3b82f6;transform:scaleX(0.990);">View</div>
<div class="b" style="left:3px;top:538px;width:1600px;height:38px;background:#fee2e2;"></div>
<div class="b" style="left:3px;top:575px;width:1600px;height:1px;background:#f3dcdc;"></div>
<div class="t" style="left:10.5px;top:549.8px;font-size:10px;line-height:13px;font-weight:400;color:#222;">9</div>
<div class="t" style="left:48.5px;top:549.8px;font-size:10px;line-height:13px;font-weight:400;color:#222;">0 mins</div>
<div class="t" style="left:134px;top:549.8px;font-size:10px;line-height:13px;font-weight:400;color:#2b2b2b;">10043 mins</div>
<div class="b" style="left:256.5px;top:553.72px;width:3px;height:3px;background:#d9d9d9;border-radius:1px;"></div>
<div class="b" style="left:262.5px;top:553.72px;width:3px;height:3px;background:#d9d9d9;border-radius:1px;"></div>
<div class="b" style="left:268.5px;top:553.72px;width:3px;height:3px;background:#d9d9d9;border-radius:1px;"></div>
<div class="t" style="left:319px;top:549.3px;font-size:11px;line-height:14px;font-weight:700;color:#111;transform:scaleX(1.010);">2590/1</div>
<div class="t" style="left:398.7px;top:549.3px;font-size:11px;line-height:14px;font-weight:700;color:#111;transform:scaleX(0.884);">REKHA THAPA</div>
<div class="t" style="left:561.5px;top:549.8px;font-size:10px;line-height:13px;font-weight:400;color:#2b2b2b;transform:scaleX(0.973);">49 Y/F</div>
<div class="b" style="left:623.2px;top:546.5200000000001px;width:20.7px;height:19.9px;background:#e60000;border-radius:3px;"></div>
<div class="t" style="left:625.2px;top:549.8px;font-size:10px;line-height:13px;font-weight:700;color:#fff;transform:scaleX(1.127);">EM</div>
<svg style="left:766.2px;top:547.72px" width="17" height="21" viewBox="0 0 17 21" fill="none" stroke="#000" stroke-width="1.9" stroke-linejoin="round" stroke-linecap="round"><path d="M3.5 1.6H10.5L15.6 6.7V17.4A2.1 2.1 0 0 1 13.5 19.5H3.5A2.1 2.1 0 0 1 1.4 17.4V3.7A2.1 2.1 0 0 1 3.5 1.6Z"/><path d="M10.3 1.9V5.3A1.3 1.3 0 0 0 11.6 6.6H15.3"/><circle cx="8.4" cy="11.4" r="1.9" stroke-width="1.7"/><path d="M5.6 16.4A2.8 2.8 0 0 1 11.2 16.4" stroke-width="1.7"/></svg>
<div class="b" style="left:809.4px;top:546.4200000000001px;width:54px;height:19.7px;background:#93c5fd;border-radius:3.5px;"></div>
<div class="t" style="left:813.4px;top:551.6px;font-size:8.5px;line-height:11px;font-weight:400;color:#fff;transform:scaleX(0.990);-webkit-text-stroke:0.35px #fff;">Consultation</div>
<div class="t" style="left:1412.5px;top:549.8px;font-size:10px;line-height:13px;font-weight:400;color:#222;transform:scaleX(0.957);">BJ</div>
<div class="t" style="left:1557.3px;top:550.5px;font-size:10px;line-height:13px;font-weight:400;color:#3b82f6;transform:scaleX(0.990);">View</div>
<div class="b" style="left:3px;top:576px;width:1600px;height:38px;background:#fee2e2;"></div>
<div class="b" style="left:3px;top:613px;width:1600px;height:1px;background:#f3dcdc;"></div>
<div class="t" style="left:10px;top:587.7px;font-size:10px;line-height:13px;font-weight:400;color:#222;">10</div>
<div class="t" style="left:48.5px;top:587.7px;font-size:10px;line-height:13px;font-weight:400;color:#222;">0 mins</div>
<div class="t" style="left:134px;top:587.7px;font-size:10px;line-height:13px;font-weight:400;color:#2b2b2b;">10041 mins</div>
<div class="b" style="left:256.5px;top:591.64px;width:3px;height:3px;background:#d9d9d9;border-radius:1px;"></div>
<div class="b" style="left:262.5px;top:591.64px;width:3px;height:3px;background:#d9d9d9;border-radius:1px;"></div>
<div class="b" style="left:268.5px;top:591.64px;width:3px;height:3px;background:#d9d9d9;border-radius:1px;"></div>
<div class="t" style="left:319px;top:587.2px;font-size:11px;line-height:14px;font-weight:700;color:#111;transform:scaleX(1.010);">25/3</div>
<div class="t" style="left:398.7px;top:587.2px;font-size:11px;line-height:14px;font-weight:700;color:#111;transform:scaleX(0.919);">DEMO1 DEMO1</div>
<div class="t" style="left:561.5px;top:587.7px;font-size:10px;line-height:13px;font-weight:400;color:#2b2b2b;transform:scaleX(0.973);">21 Y/M</div>
<div class="b" style="left:623.2px;top:584.44px;width:20.7px;height:19.9px;background:#e60000;border-radius:3px;"></div>
<div class="t" style="left:625.2px;top:587.7px;font-size:10px;line-height:13px;font-weight:700;color:#fff;transform:scaleX(1.127);">EM</div>
<svg style="left:766.2px;top:585.64px" width="17" height="21" viewBox="0 0 17 21" fill="none" stroke="#000" stroke-width="1.9" stroke-linejoin="round" stroke-linecap="round"><path d="M3.5 1.6H10.5L15.6 6.7V17.4A2.1 2.1 0 0 1 13.5 19.5H3.5A2.1 2.1 0 0 1 1.4 17.4V3.7A2.1 2.1 0 0 1 3.5 1.6Z"/><path d="M10.3 1.9V5.3A1.3 1.3 0 0 0 11.6 6.6H15.3"/><circle cx="8.4" cy="11.4" r="1.9" stroke-width="1.7"/><path d="M5.6 16.4A2.8 2.8 0 0 1 11.2 16.4" stroke-width="1.7"/></svg>
<div class="b" style="left:809.4px;top:584.34px;width:54px;height:19.7px;background:#93c5fd;border-radius:3.5px;"></div>
<div class="t" style="left:813.4px;top:589.5px;font-size:8.5px;line-height:11px;font-weight:400;color:#fff;transform:scaleX(0.990);-webkit-text-stroke:0.35px #fff;">Consultation</div>
<div class="b" style="left:1234.2px;top:584.44px;width:29.8px;height:19.7px;background:#2563eb;border-radius:3px;"></div>
<div class="t" style="left:1239.7px;top:587.2px;font-size:10.5px;line-height:14px;font-weight:700;color:#fff;transform:scaleX(0.914);">LAB</div>
<div class="t" style="left:1412.5px;top:587.7px;font-size:10px;line-height:13px;font-weight:400;color:#222;transform:scaleX(0.957);">BJ</div>
<div class="t" style="left:1557.3px;top:588.4px;font-size:10px;line-height:13px;font-weight:400;color:#3b82f6;transform:scaleX(0.990);">View</div>
<div class="b" style="left:3px;top:651px;width:1600px;height:1px;background:#ededed;"></div>
<div class="t" style="left:10px;top:625.6px;font-size:10px;line-height:13px;font-weight:400;color:#222;">11</div>
<div class="t" style="left:48.5px;top:625.6px;font-size:10px;line-height:13px;font-weight:400;color:#222;">0 mins</div>
<div class="t" style="left:134px;top:625.6px;font-size:10px;line-height:13px;font-weight:400;color:#2b2b2b;">10023 mins</div>
<div class="b" style="left:256.5px;top:629.55px;width:3px;height:3px;background:#d9d9d9;border-radius:1px;"></div>
<div class="b" style="left:262.5px;top:629.55px;width:3px;height:3px;background:#d9d9d9;border-radius:1px;"></div>
<div class="b" style="left:268.5px;top:629.55px;width:3px;height:3px;background:#d9d9d9;border-radius:1px;"></div>
<div class="t" style="left:319px;top:625.1px;font-size:11px;line-height:14px;font-weight:700;color:#111;transform:scaleX(1.010);">2591/1</div>
<div class="t" style="left:398.7px;top:625.1px;font-size:11px;line-height:14px;font-weight:700;color:#111;transform:scaleX(0.907);">JUNILA THAPA</div>
<div class="t" style="left:561.5px;top:625.6px;font-size:10px;line-height:13px;font-weight:400;color:#2b2b2b;transform:scaleX(0.973);">55 Y/F</div>
<div class="t" style="left:626.6px;top:625.6px;font-size:10px;line-height:13px;font-weight:400;color:#2b2b2b;transform:scaleX(0.973);">G</div>
<svg style="left:766.2px;top:623.55px" width="17" height="21" viewBox="0 0 17 21" fill="none" stroke="#000" stroke-width="1.9" stroke-linejoin="round" stroke-linecap="round"><path d="M3.5 1.6H10.5L15.6 6.7V17.4A2.1 2.1 0 0 1 13.5 19.5H3.5A2.1 2.1 0 0 1 1.4 17.4V3.7A2.1 2.1 0 0 1 3.5 1.6Z"/><path d="M10.3 1.9V5.3A1.3 1.3 0 0 0 11.6 6.6H15.3"/><circle cx="8.4" cy="11.4" r="1.9" stroke-width="1.7"/><path d="M5.6 16.4A2.8 2.8 0 0 1 11.2 16.4" stroke-width="1.7"/></svg>
<div class="b" style="left:809.4px;top:622.25px;width:54px;height:19.7px;background:#93c5fd;border-radius:3.5px;"></div>
<div class="t" style="left:813.4px;top:627.4px;font-size:8.5px;line-height:11px;font-weight:400;color:#fff;transform:scaleX(0.990);-webkit-text-stroke:0.35px #fff;">Consultation</div>
<div class="t" style="left:1412.5px;top:625.6px;font-size:10px;line-height:13px;font-weight:400;color:#222;transform:scaleX(0.957);">BJ</div>
<div class="t" style="left:1557.3px;top:626.4px;font-size:10px;line-height:13px;font-weight:400;color:#3b82f6;transform:scaleX(0.990);">View</div>
<div class="b" style="left:3px;top:689px;width:1600px;height:1px;background:#ededed;"></div>
<div class="t" style="left:10px;top:663.6px;font-size:10px;line-height:13px;font-weight:400;color:#222;">12</div>
<div class="t" style="left:48.5px;top:663.6px;font-size:10px;line-height:13px;font-weight:400;color:#222;">0 mins</div>
<div class="t" style="left:134px;top:663.6px;font-size:10px;line-height:13px;font-weight:400;color:#2b2b2b;">10009 mins</div>
<div class="b" style="left:256.5px;top:667.47px;width:3px;height:3px;background:#d9d9d9;border-radius:1px;"></div>
<div class="b" style="left:262.5px;top:667.47px;width:3px;height:3px;background:#d9d9d9;border-radius:1px;"></div>
<div class="b" style="left:268.5px;top:667.47px;width:3px;height:3px;background:#d9d9d9;border-radius:1px;"></div>
<div class="t" style="left:319px;top:663.1px;font-size:11px;line-height:14px;font-weight:700;color:#111;transform:scaleX(1.010);">2592/1</div>
<div class="t" style="left:398.7px;top:663.1px;font-size:11px;line-height:14px;font-weight:700;color:#111;transform:scaleX(0.891);">ALISHA GIRI</div>
<div class="t" style="left:561.5px;top:663.6px;font-size:10px;line-height:13px;font-weight:400;color:#2b2b2b;transform:scaleX(0.973);">27 Y/F</div>
<div class="t" style="left:626.6px;top:663.6px;font-size:10px;line-height:13px;font-weight:400;color:#2b2b2b;transform:scaleX(0.973);">FT</div>
<svg style="left:766.2px;top:661.47px" width="17" height="21" viewBox="0 0 17 21" fill="none" stroke="#000" stroke-width="1.9" stroke-linejoin="round" stroke-linecap="round"><path d="M3.5 1.6H10.5L15.6 6.7V17.4A2.1 2.1 0 0 1 13.5 19.5H3.5A2.1 2.1 0 0 1 1.4 17.4V3.7A2.1 2.1 0 0 1 3.5 1.6Z"/><path d="M10.3 1.9V5.3A1.3 1.3 0 0 0 11.6 6.6H15.3"/><circle cx="8.4" cy="11.4" r="1.9" stroke-width="1.7"/><path d="M5.6 16.4A2.8 2.8 0 0 1 11.2 16.4" stroke-width="1.7"/></svg>
<div class="b" style="left:809.4px;top:660.1700000000001px;width:42px;height:19.7px;background:#93c5fd;border-radius:3.5px;"></div>
<div class="t" style="left:813.4px;top:665.4px;font-size:8.5px;line-height:11px;font-weight:400;color:#fff;transform:scaleX(0.956);-webkit-text-stroke:0.35px #fff;">Inv Room</div>
<div class="b" style="left:1234.2px;top:660.2700000000001px;width:29.8px;height:19.7px;background:#16a34a;border-radius:3px;"></div>
<div class="t" style="left:1239.7px;top:663.1px;font-size:10.5px;line-height:14px;font-weight:700;color:#fff;transform:scaleX(1.137);">INV</div>
<svg style="left:1311.3px;top:660.07px" width="22" height="20" viewBox="0 0 22 20"><path d="M17.5 0.4C17.5 0.4 14.3 4.2 14.3 6.1A3.2 3.2 0 0 0 20.7 6.1C20.7 4.2 17.5 0.4 17.5 0.4Z" fill="#f06fb4"/><path d="M0.4 13.3C3.4 9.6 6.8 8 10.2 8S17 9.6 20 13.3C17 17 13.6 18.6 10.2 18.6S3.4 17 0.4 13.3Z" fill="#f06fb4"/><path d="M3.3 13.3C5.3 11.2 7.6 10.1 10.2 10.1S15.1 11.2 17.1 13.3C15.1 15.4 12.8 16.5 10.2 16.5S5.3 15.4 3.3 13.3Z" fill="#fff"/><circle cx="10.2" cy="12.9" r="3.7" fill="#f06fb4"/><circle cx="11.6" cy="12" r="0.95" fill="#fff"/></svg>
<div class="t" style="left:1332.1px;top:668.9px;font-size:10px;line-height:11px;font-weight:400;color:#444;transform:scaleX(0.962);">(1)</div>
<svg style="left:1370.8px;top:659.87px" width="20" height="20" viewBox="0 0 20 20" fill="none" stroke="#d42a2a"><circle cx="10" cy="10" r="8.6" stroke-width="1.5"/><path d="M10 8.6V13.8" stroke-width="2"/><path d="M10 5.6V6.8" stroke-width="2"/></svg>
<div class="t" style="left:1412.5px;top:663.6px;font-size:10px;line-height:13px;font-weight:400;color:#222;transform:scaleX(0.957);">VS</div>
<div class="t" style="left:1557.3px;top:664.3px;font-size:10px;line-height:13px;font-weight:400;color:#3b82f6;transform:scaleX(0.990);">View</div>
<div class="b" style="left:3px;top:727px;width:1600px;height:1px;background:#ededed;"></div>
<div class="t" style="left:10px;top:701.5px;font-size:10px;line-height:13px;font-weight:400;color:#222;">13</div>
<div class="t" style="left:48.5px;top:701.5px;font-size:10px;line-height:13px;font-weight:400;color:#222;">0 mins</div>
<div class="t" style="left:134px;top:701.5px;font-size:10px;line-height:13px;font-weight:400;color:#2b2b2b;">9948 mins</div>
<div class="b" style="left:256.5px;top:705.38px;width:3px;height:3px;background:#d9d9d9;border-radius:1px;"></div>
<div class="b" style="left:262.5px;top:705.38px;width:3px;height:3px;background:#d9d9d9;border-radius:1px;"></div>
<div class="b" style="left:268.5px;top:705.38px;width:3px;height:3px;background:#d9d9d9;border-radius:1px;"></div>
<div class="t" style="left:319px;top:701.0px;font-size:11px;line-height:14px;font-weight:700;color:#111;transform:scaleX(1.010);">2594/1</div>
<div class="t" style="left:398.7px;top:701.0px;font-size:11px;line-height:14px;font-weight:700;color:#111;transform:scaleX(0.866);">TEST PATIENT 2</div>
<div class="t" style="left:561.5px;top:701.5px;font-size:10px;line-height:13px;font-weight:400;color:#2b2b2b;transform:scaleX(0.973);">20 Y/M</div>
<div class="t" style="left:626.6px;top:701.5px;font-size:10px;line-height:13px;font-weight:400;color:#2b2b2b;transform:scaleX(0.973);">G</div>
<svg style="left:766.2px;top:699.38px" width="17" height="21" viewBox="0 0 17 21" fill="none" stroke="#000" stroke-width="1.9" stroke-linejoin="round" stroke-linecap="round"><path d="M3.5 1.6H10.5L15.6 6.7V17.4A2.1 2.1 0 0 1 13.5 19.5H3.5A2.1 2.1 0 0 1 1.4 17.4V3.7A2.1 2.1 0 0 1 3.5 1.6Z"/><path d="M10.3 1.9V5.3A1.3 1.3 0 0 0 11.6 6.6H15.3"/><circle cx="8.4" cy="11.4" r="1.9" stroke-width="1.7"/><path d="M5.6 16.4A2.8 2.8 0 0 1 11.2 16.4" stroke-width="1.7"/></svg>
<div class="b" style="left:809.4px;top:698.08px;width:49.5px;height:19.7px;background:#93c5fd;border-radius:3.5px;"></div>
<div class="t" style="left:813.4px;top:703.3px;font-size:8.5px;line-height:11px;font-weight:400;color:#fff;transform:scaleX(0.962);-webkit-text-stroke:0.35px #fff;">WU Room3</div>
<div class="t" style="left:1557.3px;top:702.2px;font-size:10px;line-height:13px;font-weight:400;color:#3b82f6;transform:scaleX(0.990);">View</div>
<div class="b" style="left:3px;top:765px;width:1600px;height:1px;background:#ededed;"></div>
<div class="t" style="left:10px;top:739.4px;font-size:10px;line-height:13px;font-weight:400;color:#222;">14</div>
<div class="t" style="left:48.5px;top:739.4px;font-size:10px;line-height:13px;font-weight:400;color:#222;">0 mins</div>
<div class="t" style="left:134px;top:739.4px;font-size:10px;line-height:13px;font-weight:400;color:#2b2b2b;">7485 mins</div>
<div class="b" style="left:256.5px;top:743.29px;width:3px;height:3px;background:#d9d9d9;border-radius:1px;"></div>
<div class="b" style="left:262.5px;top:743.29px;width:3px;height:3px;background:#d9d9d9;border-radius:1px;"></div>
<div class="b" style="left:268.5px;top:743.29px;width:3px;height:3px;background:#d9d9d9;border-radius:1px;"></div>
<div class="t" style="left:319px;top:738.9px;font-size:11px;line-height:14px;font-weight:700;color:#111;transform:scaleX(1.010);">2596/1</div>
<div class="t" style="left:398.7px;top:738.9px;font-size:11px;line-height:14px;font-weight:700;color:#111;transform:scaleX(0.875);">PRITI KOIRALA</div>
<div class="t" style="left:561.5px;top:739.4px;font-size:10px;line-height:13px;font-weight:400;color:#2b2b2b;transform:scaleX(0.973);">29 Y/F</div>
<div class="t" style="left:626.6px;top:739.4px;font-size:10px;line-height:13px;font-weight:400;color:#2b2b2b;transform:scaleX(0.973);">FT</div>
<svg style="left:766.2px;top:737.29px" width="17" height="21" viewBox="0 0 17 21" fill="none" stroke="#000" stroke-width="1.9" stroke-linejoin="round" stroke-linecap="round"><path d="M3.5 1.6H10.5L15.6 6.7V17.4A2.1 2.1 0 0 1 13.5 19.5H3.5A2.1 2.1 0 0 1 1.4 17.4V3.7A2.1 2.1 0 0 1 3.5 1.6Z"/><path d="M10.3 1.9V5.3A1.3 1.3 0 0 0 11.6 6.6H15.3"/><circle cx="8.4" cy="11.4" r="1.9" stroke-width="1.7"/><path d="M5.6 16.4A2.8 2.8 0 0 1 11.2 16.4" stroke-width="1.7"/></svg>
<div class="b" style="left:809.4px;top:735.99px;width:54px;height:19.7px;background:#93c5fd;border-radius:3.5px;"></div>
<div class="t" style="left:813.4px;top:741.2px;font-size:8.5px;line-height:11px;font-weight:400;color:#fff;transform:scaleX(0.990);-webkit-text-stroke:0.35px #fff;">Consultation</div>
<div class="b" style="left:1234.2px;top:736.09px;width:29.8px;height:19.7px;background:#16a34a;border-radius:3px;"></div>
<div class="t" style="left:1239.7px;top:738.9px;font-size:10.5px;line-height:14px;font-weight:700;color:#fff;transform:scaleX(1.137);">INV</div>
<svg style="left:1311.3px;top:735.89px" width="22" height="20" viewBox="0 0 22 20"><path d="M17.5 0.4C17.5 0.4 14.3 4.2 14.3 6.1A3.2 3.2 0 0 0 20.7 6.1C20.7 4.2 17.5 0.4 17.5 0.4Z" fill="#52c41a"/><path d="M0.4 13.3C3.4 9.6 6.8 8 10.2 8S17 9.6 20 13.3C17 17 13.6 18.6 10.2 18.6S3.4 17 0.4 13.3Z" fill="#52c41a"/><path d="M3.3 13.3C5.3 11.2 7.6 10.1 10.2 10.1S15.1 11.2 17.1 13.3C15.1 15.4 12.8 16.5 10.2 16.5S5.3 15.4 3.3 13.3Z" fill="#fff"/><circle cx="10.2" cy="12.9" r="3.7" fill="#52c41a"/><circle cx="11.6" cy="12" r="0.95" fill="#fff"/></svg>
<div class="t" style="left:1332.1px;top:744.7px;font-size:10px;line-height:11px;font-weight:400;color:#444;transform:scaleX(0.962);">(1)</div>
<svg style="left:1370.8px;top:735.6899999999999px" width="20" height="20" viewBox="0 0 20 20" fill="none" stroke="#d42a2a"><circle cx="10" cy="10" r="8.6" stroke-width="1.5"/><path d="M10 8.6V13.8" stroke-width="2"/><path d="M10 5.6V6.8" stroke-width="2"/></svg>
<div class="t" style="left:1412.5px;top:739.4px;font-size:10px;line-height:13px;font-weight:400;color:#222;transform:scaleX(0.957);">VS</div>
<div class="t" style="left:1557.3px;top:740.1px;font-size:10px;line-height:13px;font-weight:400;color:#3b82f6;transform:scaleX(0.990);">View</div>
<div class="b" style="left:3px;top:766px;width:1600px;height:38px;background:#fee2e2;"></div>
<div class="b" style="left:3px;top:803px;width:1600px;height:1px;background:#f3dcdc;"></div>
<div class="t" style="left:10px;top:777.3px;font-size:10px;line-height:13px;font-weight:400;color:#222;">15</div>
<div class="t" style="left:48.5px;top:777.3px;font-size:10px;line-height:13px;font-weight:400;color:#222;">0 mins</div>
<div class="t" style="left:134px;top:777.3px;font-size:10px;line-height:13px;font-weight:400;color:#2b2b2b;">7314 mins</div>
<div class="b" style="left:256.5px;top:781.2099999999999px;width:3px;height:3px;background:#d9d9d9;border-radius:1px;"></div>
<div class="b" style="left:262.5px;top:781.2099999999999px;width:3px;height:3px;background:#d9d9d9;border-radius:1px;"></div>
<div class="b" style="left:268.5px;top:781.2099999999999px;width:3px;height:3px;background:#d9d9d9;border-radius:1px;"></div>
<div class="t" style="left:319px;top:776.8px;font-size:11px;line-height:14px;font-weight:700;color:#111;transform:scaleX(1.010);">2598/1</div>
<div class="t" style="left:398.7px;top:776.8px;font-size:11px;line-height:14px;font-weight:700;color:#111;transform:scaleX(0.896);">SUMITRA KOIRALA</div>
<div class="t" style="left:561.5px;top:777.3px;font-size:10px;line-height:13px;font-weight:400;color:#2b2b2b;transform:scaleX(0.973);">74 Y/F</div>
<div class="b" style="left:623.1px;top:774.31px;width:17px;height:19.7px;background:#fff;border-radius:3px;"></div>
<div class="t" style="left:626.3px;top:777.3px;font-size:10px;line-height:13px;font-weight:400;color:#222;transform:scaleX(0.973);">FT</div>
<svg style="left:766.2px;top:775.2099999999999px" width="17" height="21" viewBox="0 0 17 21" fill="none" stroke="#000" stroke-width="1.9" stroke-linejoin="round" stroke-linecap="round"><path d="M3.5 1.6H10.5L15.6 6.7V17.4A2.1 2.1 0 0 1 13.5 19.5H3.5A2.1 2.1 0 0 1 1.4 17.4V3.7A2.1 2.1 0 0 1 3.5 1.6Z"/><path d="M10.3 1.9V5.3A1.3 1.3 0 0 0 11.6 6.6H15.3"/><circle cx="8.4" cy="11.4" r="1.9" stroke-width="1.7"/><path d="M5.6 16.4A2.8 2.8 0 0 1 11.2 16.4" stroke-width="1.7"/></svg>
<div class="b" style="left:809.4px;top:773.91px;width:54px;height:19.7px;background:#93c5fd;border-radius:3.5px;"></div>
<div class="t" style="left:813.4px;top:779.1px;font-size:8.5px;line-height:11px;font-weight:400;color:#fff;transform:scaleX(0.990);-webkit-text-stroke:0.35px #fff;">Consultation</div>
<div class="b" style="left:1234.2px;top:774.01px;width:29.8px;height:19.7px;background:#16a34a;border-radius:3px;"></div>
<div class="t" style="left:1239.7px;top:776.8px;font-size:10.5px;line-height:14px;font-weight:700;color:#fff;transform:scaleX(1.137);">INV</div>
<svg style="left:1311.3px;top:773.81px" width="22" height="20" viewBox="0 0 22 20"><path d="M17.5 0.4C17.5 0.4 14.3 4.2 14.3 6.1A3.2 3.2 0 0 0 20.7 6.1C20.7 4.2 17.5 0.4 17.5 0.4Z" fill="#52c41a"/><path d="M0.4 13.3C3.4 9.6 6.8 8 10.2 8S17 9.6 20 13.3C17 17 13.6 18.6 10.2 18.6S3.4 17 0.4 13.3Z" fill="#52c41a"/><path d="M3.3 13.3C5.3 11.2 7.6 10.1 10.2 10.1S15.1 11.2 17.1 13.3C15.1 15.4 12.8 16.5 10.2 16.5S5.3 15.4 3.3 13.3Z" fill="#fff"/><circle cx="10.2" cy="12.9" r="3.7" fill="#52c41a"/><circle cx="11.6" cy="12" r="0.95" fill="#fff"/></svg>
<div class="t" style="left:1332.1px;top:782.6px;font-size:10px;line-height:11px;font-weight:400;color:#444;transform:scaleX(0.962);">(1)</div>
<svg style="left:1370.8px;top:773.6099999999999px" width="20" height="20" viewBox="0 0 20 20" fill="none" stroke="#d42a2a"><circle cx="10" cy="10" r="8.6" stroke-width="1.5"/><path d="M10 8.6V13.8" stroke-width="2"/><path d="M10 5.6V6.8" stroke-width="2"/></svg>
<div class="t" style="left:1412.5px;top:777.3px;font-size:10px;line-height:13px;font-weight:400;color:#222;transform:scaleX(0.957);">DC</div>
<div class="t" style="left:1557.3px;top:778.0px;font-size:10px;line-height:13px;font-weight:400;color:#3b82f6;transform:scaleX(0.990);">View</div>
<div class="t" style="left:1344px;top:716.8px;font-size:16px;line-height:21px;font-weight:400;color:rgba(120,120,120,0.42);transform:scaleX(1.052);">Activate Windows</div>
<div class="t" style="left:1343px;top:738.3px;font-size:12.5px;line-height:16px;font-weight:400;color:rgba(120,120,120,0.42);transform:scaleX(1.018);">Go to Settings to activate Windows.</div>
</body></html>
